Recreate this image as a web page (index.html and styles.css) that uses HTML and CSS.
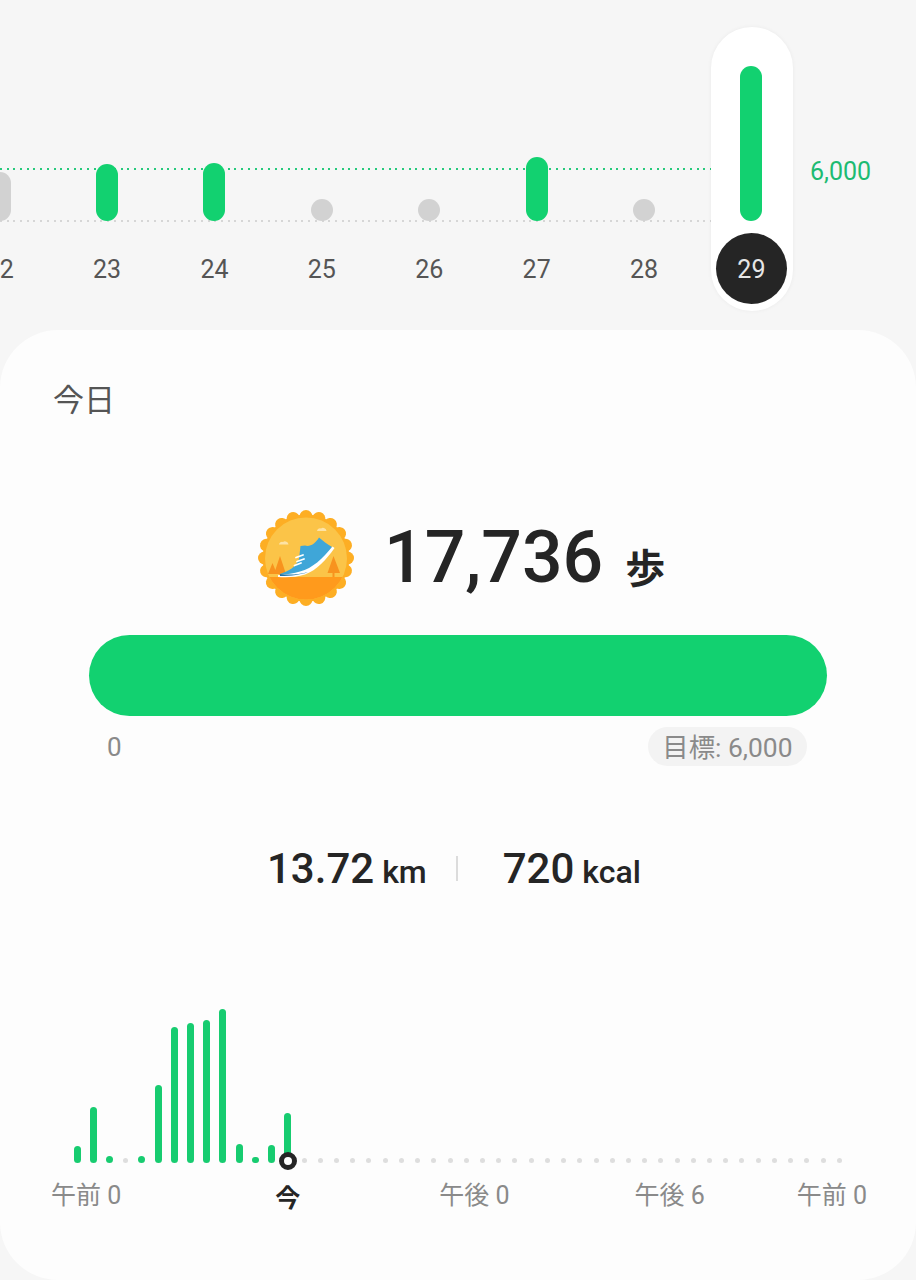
FILE: index.html
```html
<!DOCTYPE html>
<html lang="ja">
<head>
<meta charset="utf-8">
<title>歩数</title>
<link rel="stylesheet" href="styles.css">
</head>
<body>
<main class="screen">
  <section class="week">
    <div class="guide guide-goal"></div>
    <div class="guide guide-base"></div>
    <div class="days">
      <div class="day"><div class="slot"><div class="bar off" style="height:49px"></div></div><div class="num">22</div></div>
      <div class="day"><div class="slot"><div class="bar" style="height:57px"></div></div><div class="num">23</div></div>
      <div class="day"><div class="slot"><div class="bar" style="height:58px"></div></div><div class="num">24</div></div>
      <div class="day"><div class="slot"><div class="bar off" style="height:22px"></div></div><div class="num">25</div></div>
      <div class="day"><div class="slot"><div class="bar off" style="height:22px"></div></div><div class="num">26</div></div>
      <div class="day"><div class="slot"><div class="bar" style="height:64px"></div></div><div class="num">27</div></div>
      <div class="day"><div class="slot"><div class="bar off" style="height:22px"></div></div><div class="num">28</div></div>
      <div class="day today"><div class="pill"></div><div class="slot"><div class="bar" style="height:155px"></div></div><div class="num current">29</div></div>
    </div>
    <div class="goal-tag">6,000</div>
  </section>

  <section class="card">
    <h1 class="title">今日</h1>
    <div class="hero">
      <svg class="badge" viewBox="0 0 96 96" aria-hidden="true">
        <defs>
          <clipPath id="disc"><circle cx="48" cy="48.500" r="41"/></clipPath>
          <g id="scallop"><circle cx="48" cy="6.500" r="6.500" fill="#fdae24"/></g>
        </defs>
        <circle cx="48" cy="48" r="43.500" fill="#fdae24"/>
        <use href="#scallop"/>
        <use href="#scallop" transform="rotate(18 48 48)"/>
        <use href="#scallop" transform="rotate(36 48 48)"/>
        <use href="#scallop" transform="rotate(54 48 48)"/>
        <use href="#scallop" transform="rotate(72 48 48)"/>
        <use href="#scallop" transform="rotate(90 48 48)"/>
        <use href="#scallop" transform="rotate(108 48 48)"/>
        <use href="#scallop" transform="rotate(126 48 48)"/>
        <use href="#scallop" transform="rotate(144 48 48)"/>
        <use href="#scallop" transform="rotate(162 48 48)"/>
        <use href="#scallop" transform="rotate(180 48 48)"/>
        <use href="#scallop" transform="rotate(198 48 48)"/>
        <use href="#scallop" transform="rotate(216 48 48)"/>
        <use href="#scallop" transform="rotate(234 48 48)"/>
        <use href="#scallop" transform="rotate(252 48 48)"/>
        <use href="#scallop" transform="rotate(270 48 48)"/>
        <use href="#scallop" transform="rotate(288 48 48)"/>
        <use href="#scallop" transform="rotate(306 48 48)"/>
        <use href="#scallop" transform="rotate(324 48 48)"/>
        <use href="#scallop" transform="rotate(342 48 48)"/>
        <g clip-path="url(#disc)">
          <rect width="96" height="96" fill="#fbc448"/>
          <rect y="67" width="96" height="30" fill="#ff9a1c"/>
        </g>
        <path d="M22 46 L28 64 H16 Z M14.500 53 L19 64 H10 Z M75.500 46 L82 63 H69.500 Z" fill="#f8931e"/>
        <path d="M74.500 62h2v5h-2z M21 62h2v5h-2z" fill="#f8931e"/>
        <path d="M21 34.500a3 3 0 0 1 4-2.500 3.500 3.500 0 0 1 5.500 2.500z M59 21a3 3 0 0 1 4-2.500 3.500 3.500 0 0 1 5.500 2.500z" fill="#fde3a6"/>
        <path d="M22 64 C31 61 38 57 41 49 L42.500 36 L47 35.500 C52 37 57 34 61 27.500 C65 31 69 34 74 37 C68 46 61 57 50 62 C40 65 30 65 22 64 Z" fill="#3fa6d8"/>
        <path d="M20 65 C29 64.500 36 63.500 42 61.500 C55 58 64 49 74.500 36.500 L76.500 38 C68 50 59 60 47 64.500 C38 67.500 28 67.500 20 67 Z" fill="#fff"/>
        <path d="M38 47.500 L45 45 M39 51.500 L46 49 M36.500 55.500 L43 53" stroke="#fff" stroke-width="1.800" stroke-linecap="round"/>
        <path d="M22 66 C33 66 44 64.500 50 62 C40 65 30 65 22 64 Z" fill="#1f74ad"/>
      </svg>
      <div class="count">17,736</div>
      <div class="unit-steps">歩</div>
    </div>
    <div class="progress"></div>
    <div class="scale">
      <span class="scale-zero">0</span>
      <span class="goal-chip">目標: 6,000</span>
    </div>
    <div class="stats">
      <div class="stat"><span class="stat-value">13.72</span><span class="stat-unit">km</span></div>
      <div class="stat-rule"></div>
      <div class="stat"><span class="stat-value">720</span><span class="stat-unit">kcal</span></div>
    </div>
    <div class="hours">
      <div class="hour" style="height:17px"></div>
      <div class="hour" style="height:56px"></div>
      <div class="hour" style="height:7px"></div>
      <div class="hour empty"></div>
      <div class="hour" style="height:7px"></div>
      <div class="hour" style="height:78px"></div>
      <div class="hour" style="height:136px"></div>
      <div class="hour" style="height:140px"></div>
      <div class="hour" style="height:143px"></div>
      <div class="hour" style="height:154px"></div>
      <div class="hour" style="height:19px"></div>
      <div class="hour" style="height:6px"></div>
      <div class="hour" style="height:18px"></div>
      <div class="hour now" style="height:50px"><span class="now-ring"></span></div>
      <div class="hour empty"></div><div class="hour empty"></div><div class="hour empty"></div><div class="hour empty"></div>
      <div class="hour empty"></div><div class="hour empty"></div><div class="hour empty"></div><div class="hour empty"></div>
      <div class="hour empty"></div><div class="hour empty"></div><div class="hour empty"></div><div class="hour empty"></div>
      <div class="hour empty"></div><div class="hour empty"></div><div class="hour empty"></div><div class="hour empty"></div>
      <div class="hour empty"></div><div class="hour empty"></div><div class="hour empty"></div><div class="hour empty"></div>
      <div class="hour empty"></div><div class="hour empty"></div><div class="hour empty"></div><div class="hour empty"></div>
      <div class="hour empty"></div><div class="hour empty"></div><div class="hour empty"></div><div class="hour empty"></div>
      <div class="hour empty"></div><div class="hour empty"></div><div class="hour empty"></div><div class="hour empty"></div>
      <div class="hour empty"></div><div class="hour empty"></div>
    </div>
    <div class="axis">
      <span class="tick-label t-start">午前 0</span>
      <span class="tick-label t-now">今</span>
      <span class="tick-label t-noon">午後 0</span>
      <span class="tick-label t-eve">午後 6</span>
      <span class="tick-label t-end">午前 0</span>
    </div>
  </section>
</main>
</body>
</html>
```
FILE: styles.css
```css
* { box-sizing: border-box; }
html, body { margin: 0; padding: 0; }
body {
  width: 916px;
  height: 1280px;
  overflow: hidden;
  background: #f6f6f6;
  font-family: Roboto, "Noto Sans CJK JP", sans-serif;
}
.screen { width: 916px; height: 1280px; overflow: hidden; }

.week { position: relative; height: 330px; overflow: hidden; }
.guide { position: absolute; left: 0; width: 714px; height: 2px; }
.guide-goal {
  top: 168px;
  background: repeating-linear-gradient(90deg, #27c97c 0 2px, transparent 2px 6.7px);
}
.guide-base {
  top: 220px;
  background: repeating-linear-gradient(90deg, #d6d6d6 0 2px, transparent 2px 6.7px);
}
.days { position: relative; display: flex; margin-left: -54px; width: 970px; }
.day {
  position: relative;
  width: 107.4px;
  flex: none;
  display: flex;
  flex-direction: column;
  align-items: center;
}
.slot {
  position: relative;
  height: 221px;
  display: flex;
  align-items: flex-end;
}
.bar { width: 22px; border-radius: 11px; background: #12d170; }
.bar.off { background: #d2d2d2; }
.num {
  position: relative;
  margin-top: 12px;
  width: 71px;
  height: 71px;
  padding-top: 1px;
  border-radius: 50%;
  display: flex;
  align-items: center;
  justify-content: center;
  font-size: 25px;
  color: #555;
}
.num.current { background: #252525; color: #e6e6e6; }
.pill {
  position: absolute;
  left: 12.8px;
  top: 27px;
  width: 82px;
  height: 284px;
  border-radius: 41px;
  background: #fff;
  box-shadow: 0 0 4px rgba(0, 0, 0, 0.05);
}
.goal-tag {
  position: absolute;
  left: 810px;
  top: 157px;
  font-size: 25px;
  line-height: 30px;
  color: #1dbb72;
}

.card {
  height: 950px;
  background: #fdfdfd;
  border-radius: 58px;
  padding-top: 48px;
}
.title {
  margin: 0;
  padding-left: 53px;
  font-family: "Noto Sans CJK JP", sans-serif;
  font-size: 31px;
  font-weight: 400;
  line-height: 40px;
  color: #555;
}
.hero {
  margin-top: 92px;
  height: 96px;
  padding-left: 258px;
  display: flex;
  align-items: center;
}
.badge { width: 96px; height: 96px; flex: none; }
.count {
  margin-left: 30px;
  font-size: 71.5px;
  font-weight: 500;
  line-height: 96px;
  color: #252525;
}
.unit-steps {
  margin-left: 22px;
  margin-top: 16px;
  font-family: "Noto Sans CJK JP", sans-serif;
  font-size: 40px;
  font-weight: 700;
  line-height: 50px;
  color: #252525;
}
.progress {
  margin: 29px 0 0 89px;
  width: 738px;
  height: 81px;
  border-radius: 41px;
  background: #12d170;
}
.scale {
  margin: 11px 0 0 107px;
  width: 700px;
  height: 39px;
  display: flex;
  justify-content: space-between;
  align-items: center;
  font-size: 26px;
  color: #8a8a8a;
}
.goal-chip {
  height: 39px;
  padding: 0 14.500px 3px;
  border-radius: 20px;
  background: #f3f3f3;
  display: flex;
  align-items: center;
  font-size: 26.4px;
}
.stats {
  margin-top: 72px;
  height: 60px;
  padding-left: 267px;
  display: flex;
  align-items: center;
  color: #252525;
}
.stat { display: flex; align-items: baseline; gap: 8px; font-weight: 500; }
.stat-value { font-size: 42px; }
.stat-unit { font-size: 32px; }
.stat-rule {
  width: 2px;
  height: 25px;
  margin: 0 45px 0 29px;
  background: #dcdcdc;
}
.hours {
  margin-top: 105px;
  height: 160px;
  padding-left: 73.500px;
  display: flex;
  align-items: flex-end;
  gap: 9.230px;
}
.hour {
  position: relative;
  width: 7px;
  flex: none;
  border-radius: 3.500px;
  background: #17cc70;
}
.hour.empty {
  width: 5px;
  height: 5px;
  margin: 0 1px;
  border-radius: 50%;
  background: #dedede;
}
.now-ring {
  position: absolute;
  left: -5.500px;
  bottom: -7px;
  width: 18px;
  height: 18px;
  border: 5px solid #252525;
  border-radius: 50%;
  background: #fff;
}
.axis {
  margin-top: 15px;
  height: 36px;
  padding-left: 51px;
  display: flex;
  align-items: center;
}
.tick-label {
  font-family: Roboto, "Noto Sans CJK JP", sans-serif;
  font-size: 25px;
  line-height: 36px;
  color: #8a8a8a;
  white-space: nowrap;
}
.tick-label.t-now {
  margin-left: 154px;
  font-family: "Noto Sans CJK JP", sans-serif;
  font-weight: 700;
  color: #252525;
}
.t-noon { margin-left: 139px; }
.t-eve { margin-left: 125px; }
.t-end { margin-left: 92px; }
```
